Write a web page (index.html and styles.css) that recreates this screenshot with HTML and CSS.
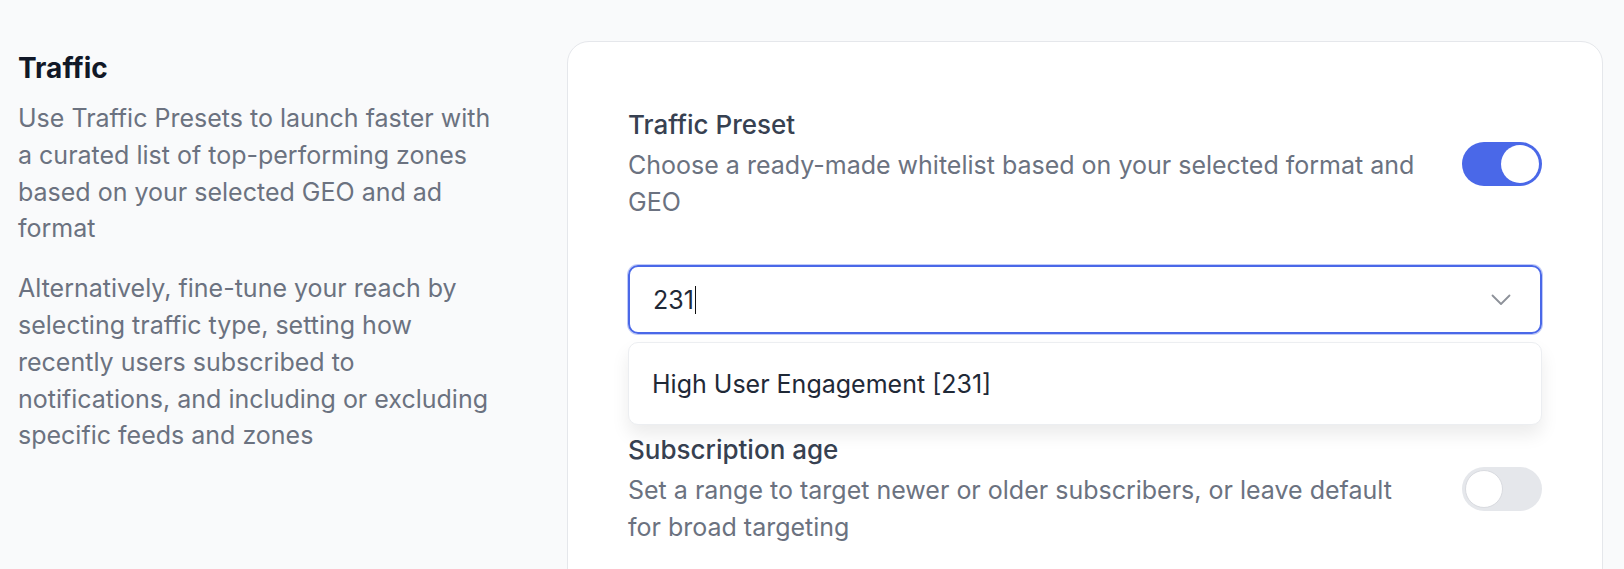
FILE: index.html
```html
<!DOCTYPE html>
<html lang="en">
<head>
  <meta charset="UTF-8" />
  <meta name="viewport" content="width=device-width, initial-scale=1.0"/>
  <title>Traffic settings</title>
  <link rel="stylesheet" href="styles.css">
</head>
<body>
  <div class="page">
    <div class="intro">
      <h2>Traffic</h2>
      <p>Use Traffic Presets to launch faster with a curated list of top-performing zones based on your selected GEO and ad format</p>
      <p>Alternatively, fine-tune your reach by selecting traffic type, setting how recently users subscribed to notifications, and including or excluding specific feeds and zones</p>
    </div>

    <div class="card">
      <div class="setting">
        <div class="setting-text">
          <div class="setting-label">Traffic Preset</div>
          <div class="setting-desc">Choose a ready-made whitelist based on your selected format and GEO</div>
        </div>
        <div class="toggle on"><span class="knob"></span></div>
      </div>

      <div class="select-wrap">
        <div class="select">
          <span class="select-value">231<span class="caret"></span></span>
          <svg class="chevron" width="20" height="12" viewBox="0 0 20 12">
            <path d="M1.5 1.5 L10 10 L18.5 1.5" fill="none" stroke="#8d9199" stroke-width="1.8" stroke-linecap="round" stroke-linejoin="round"/>
          </svg>
        </div>
        <div class="dropdown">
          <div class="option">High User Engagement [231]</div>
        </div>
      </div>

      <div class="setting setting-sub">
        <div class="setting-text">
          <div class="setting-label">Subscription age</div>
          <div class="setting-desc">Set a range to target newer or older subscribers, or leave default for broad targeting</div>
        </div>
        <div class="toggle"><span class="knob"></span></div>
      </div>
    </div>
  </div>
</body>
</html>
```

FILE: styles.css
```css
body {
  margin: 0;
  font-family: Inter, 'Noto Sans', sans-serif;
  background-color: #f9fafb;
  color: #111827;
  overflow: hidden;
}
.page {
  display: grid;
  grid-template-columns: 484px 1fr;
  gap: 65px;
  padding: 41px 21px 0 18px;
  align-items: start;
}
.intro {
  padding-top: 9px;
}
.intro h2 {
  margin: 0 0 14px;
  font-size: 28px;
  line-height: 36px;
  font-weight: 700;
  color: #111827;
}
.intro p {
  margin: 0 0 23px;
  font-size: 25px;
  line-height: 36.8px;
  color: #6b7280;
}
.card {
  background: #fff;
  border: 1px solid #e5e7eb;
  border-radius: 22px;
  padding: 65px 60px 80px;
}
.setting {
  display: flex;
  align-items: center;
  gap: 38px;
}
.setting-text {
  flex: 1;
}
.setting-label {
  font-size: 26px;
  line-height: 36.8px;
  font-weight: 500;
  color: #374151;
  margin-bottom: 3px;
}
.setting-desc {
  font-size: 25px;
  line-height: 36.8px;
  color: #6b7280;
}
.toggle {
  width: 80px;
  height: 44px;
  border-radius: 22px;
  background: #e5e7eb;
  display: flex;
  align-items: center;
  padding: 0 3px;
  box-sizing: border-box;
  flex-shrink: 0;
}
.toggle .knob {
  width: 38px;
  height: 38px;
  border-radius: 50%;
  background: #fff;
  box-sizing: border-box;
  border: 1px solid #d9dbe0;
}
.toggle.on {
  background: #4a68e8;
  justify-content: flex-end;
}
.toggle.on .knob {
  border: none;
}
.select-wrap {
  position: relative;
  margin-top: 45px;
}
.select {
  height: 69px;
  box-sizing: border-box;
  border: 2px solid #4a68e8;
  box-shadow: 0 0 0 1px rgba(74, 104, 232, 0.35);
  border-radius: 10px;
  display: flex;
  align-items: center;
  justify-content: space-between;
  padding: 0 29px 0 23px;
  font-size: 25px;
  color: #1f2937;
}
.caret {
  display: inline-block;
  width: 1px;
  height: 28px;
  background: #111;
  vertical-align: -5px;
  margin-left: 1px;
}
.chevron {
  display: block;
}
.dropdown {
  position: absolute;
  top: calc(100% + 8px);
  left: 0;
  right: 0;
  background: #fff;
  border: 1px solid #eceef1;
  border-radius: 10px;
  box-shadow: 0 10px 18px rgba(0, 0, 0, 0.08);
  z-index: 2;
}
.option {
  height: 81px;
  display: flex;
  align-items: center;
  padding: 0 23px;
  font-size: 25px;
  color: #1f2937;
}
.setting-sub {
  margin-top: 98px;
}
```
